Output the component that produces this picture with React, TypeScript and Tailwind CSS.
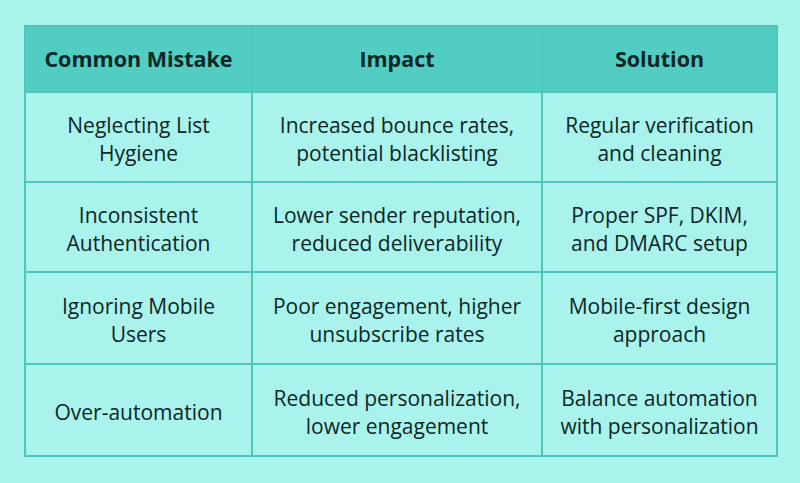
const rows = [
  [["Neglecting List", "Hygiene"], ["Increased bounce rates,", "potential blacklisting"], ["Regular verification", "and cleaning"]],
  [["Inconsistent", "Authentication"], ["Lower sender reputation,", "reduced deliverability"], ["Proper SPF, DKIM,", "and DMARC setup"]],
  [["Ignoring Mobile", "Users"], ["Poor engagement, higher", "unsubscribe rates"], ["Mobile-first design", "approach"]],
  [["Over-automation"], ["Reduced personalization,", "lower engagement"], ["Balance automation", "with personalization"]],
];

const heights = ["h-[90px]", "h-[90px]", "h-[92px]", "h-[90px]"];

export default function App() {
  return (
    <div
      className="w-[800px] h-[483px] bg-[#a9f3ec] pt-[25px] pl-[24px]"
      style={{ fontFamily: '"Open Sans", "Liberation Sans", sans-serif' }}
    >
      <div className="w-[754px] border-2 border-[#4fc6bc] grid grid-cols-[227px_290px_233px] text-[#0d2627]">
        {["Common Mistake", "Impact", "Solution"].map((h, i) => (
          <div
            key={h}
            className={`h-[66px] bg-[#52cdc2] border-b-2 border-[#4fc6bc] flex items-center justify-center text-[21.5px] font-bold ${
              i < 2 ? "border-r-2" : ""
            }`}
          >
            {h}
          </div>
        ))}
        {rows.map((row, r) =>
          row.map((cell, c) => (
            <div
              key={`${r}-${c}`}
              className={`${heights[r]} pt-[3px] ${r < 3 ? "border-b-2" : ""} border-[#4fc6bc] ${
                c < 2 ? "border-r-2" : ""
              } flex flex-col items-center justify-center text-center text-[21px] leading-[28px]`}
            >
              {cell.map((l) => (
                <span key={l}>{l}</span>
              ))}
            </div>
          ))
        )}
      </div>
    </div>
  );
}
